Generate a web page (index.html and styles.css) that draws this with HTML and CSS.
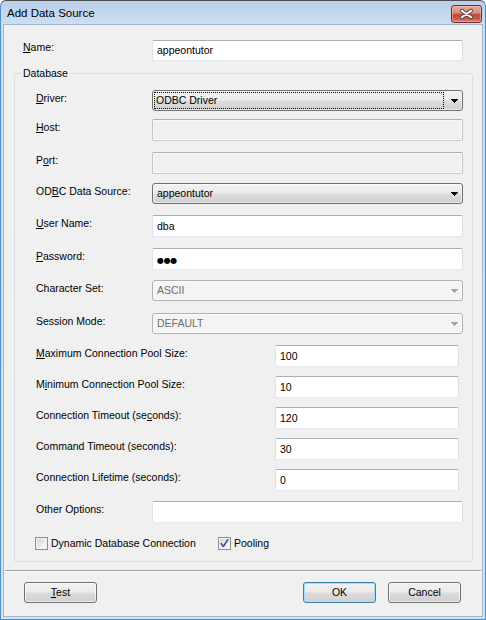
FILE: index.html
```
<!DOCTYPE html>
<html>
<head>
<meta charset="utf-8">
<title>Add Data Source</title>
<link rel="stylesheet" href="styles.css">
</head>
<body>
<div class="window">
  <div class="titlebar">
    <div class="title">Add Data Source</div>
    <div class="close">
      <svg width="31" height="16" viewBox="0 0 31 16">
        <path d="M10.5 4.5 L20.5 11.5 M20.5 4.5 L10.5 11.5" stroke="#5e4644" stroke-width="4.2" stroke-linecap="round"/>
        <path d="M10.5 4.5 L20.5 11.5 M20.5 4.5 L10.5 11.5" stroke="#ffffff" stroke-width="2.2" stroke-linecap="round"/>
      </svg>
    </div>
  </div>
  <div class="client">
    <div class="name-row">
      <span class="lbl name-lbl"><u>N</u>ame:</span>
      <div class="textbox name-box">appeontutor</div>
    </div>
    <fieldset class="group">
      <legend>Database</legend>
      <div class="grid">
        <span class="lbl"><u>D</u>river:</span>
        <div class="combo span2">
          <span class="value focused">ODBC Driver</span>
          <span class="arrow"><svg width="7" height="4" viewBox="0 0 7 4" shape-rendering="crispEdges"><path d="M0 0h7v1h-1v1h-1v1h-1v1h-1v-1h-1v-1h-1v-1h-1z" fill="#000"/></svg></span>
        </div>

        <span class="lbl"><u>H</u>ost:</span>
        <div class="textbox disabled span2"></div>

        <span class="lbl">P<u>o</u>rt:</span>
        <div class="textbox disabled span2"></div>

        <span class="lbl">OD<u>B</u>C Data Source:</span>
        <div class="combo span2">
          <span class="value">appeontutor</span>
          <span class="arrow"><svg width="7" height="4" viewBox="0 0 7 4" shape-rendering="crispEdges"><path d="M0 0h7v1h-1v1h-1v1h-1v1h-1v-1h-1v-1h-1v-1h-1z" fill="#000"/></svg></span>
        </div>

        <span class="lbl"><u>U</u>ser Name:</span>
        <div class="textbox span2">dba</div>

        <span class="lbl"><u>P</u>assword:</span>
        <div class="textbox span2"><span class="dots">●●●</span></div>

        <span class="lbl">Character Set:</span>
        <div class="combo disabled span2">
          <span class="value">ASCII</span>
          <span class="arrow"><svg width="7" height="4" viewBox="0 0 7 4" shape-rendering="crispEdges"><path d="M0 0h7v1h-1v1h-1v1h-1v1h-1v-1h-1v-1h-1v-1h-1z" fill="#a3a3a3"/></svg></span>
        </div>

        <span class="lbl">Session Mode:</span>
        <div class="combo disabled span2">
          <span class="value">DEFAULT</span>
          <span class="arrow"><svg width="7" height="4" viewBox="0 0 7 4" shape-rendering="crispEdges"><path d="M0 0h7v1h-1v1h-1v1h-1v1h-1v-1h-1v-1h-1v-1h-1z" fill="#a3a3a3"/></svg></span>
        </div>

        <span class="lbl span2"><u>M</u>aximum Connection Pool Size:</span>
        <div class="textbox num">100</div>

        <span class="lbl span2">M<u>i</u>nimum Connection Pool Size:</span>
        <div class="textbox num">10</div>

        <span class="lbl span2">Connection Timeout (se<u>c</u>onds):</span>
        <div class="textbox num">120</div>

        <span class="lbl span2">Command Timeout (seconds):</span>
        <div class="textbox num">30</div>

        <span class="lbl span2">Connection Lifetime (seconds):</span>
        <div class="textbox num">0</div>

        <span class="lbl">Other Options:</span>
        <div class="textbox span2"></div>

        <div class="cb-row">
          <label class="cb-item cb-first"><span class="cb"></span><span>Dynamic Database Connection</span></label>
          <label class="cb-item"><span class="cb checked"><svg width="11" height="11" viewBox="0 0 11 11"><path d="M2.2 5.6 L4.3 8.4 L8.8 1.8" fill="none" stroke="#3d5a94" stroke-width="1.7" stroke-linecap="round" stroke-linejoin="round"/></svg></span><span>Pooling</span></label>
        </div>
      </div>
    </fieldset>
    <div class="sep"></div>
    <div class="buttons">
      <button class="btn btn-test"><u>T</u>est</button>
      <button class="btn default">OK</button>
      <button class="btn">Cancel</button>
    </div>
  </div>
</div>
</body>
</html>
```
FILE: styles.css
```
* {
  box-sizing: border-box;
}

html, body {
  margin: 0;
  background: #ffffff;
}

body {
  font-family: "Liberation Sans", Arial, sans-serif;
  font-size: 10.5px;
  color: #000;
}

u {
  text-decoration: underline;
  text-underline-offset: 1px;
}

.window {
  width: 486px;
  height: 620px;
  display: flex;
  flex-direction: column;
  border: 1px solid #4a8fce;
  border-top-color: #4d4d4d;
  border-radius: 6px 6px 0 0;
  background: linear-gradient(#b9cfe8 0px, #cddff1 24px, #d2e2f3 100%);
  padding: 0 2px 2px;
}

.titlebar {
  height: 23px;
  display: flex;
  justify-content: space-between;
  align-items: flex-start;
}

.title {
  padding: 5px 0 0 4px;
  font-size: 11.5px;
  line-height: 14px;
  color: #000;
}

.close {
  width: 31px;
  height: 18px;
  margin: 4px 1px 0 0;
  border: 1px solid #6e2c28;
  border-radius: 3px;
  background: linear-gradient(#e8a89b 0%, #d88b7d 45%, #c14b3b 52%, #c65546 75%, #d98372 100%);
  box-shadow: inset 0 0 0 1px rgba(255, 210, 200, 0.45);
  display: flex;
}

.client {
  flex: 1;
  background: #f0f0f0;
  border: 1px solid #a3b7cc;
  padding: 15px 9px 0 10px;
  display: flex;
  flex-direction: column;
}

.name-row {
  display: flex;
  padding-left: 9px;
  height: 21px;
}

.lbl {
  line-height: 13px;
  padding-top: 2px;
  white-space: nowrap;
}

.name-lbl {
  width: 129px;
  padding-top: 1px;
}

.textbox {
  height: 22px;
  border: 1px solid;
  border-color: #abadb3 #dbdfe6 #e3e9ef #e2e3ea;
  border-radius: 2px;
  background: #fff;
  padding: 0 4px;
  line-height: 20px;
  white-space: nowrap;
  overflow: hidden;
}

.name-box {
  width: 311px;
  height: 21px;
  line-height: 19px;
}

.textbox.disabled {
  background: #f0f0f0;
  border-color: #adb2b5 #c2c4c6 #c9cbcd #c2c4c6;
  box-shadow: inset 0 0 0 1px #f9f9f9;
}

.textbox.num {
  width: 184px;
}

.dots {
  font-family: "DejaVu Sans", sans-serif;
  font-size: 8px;
  letter-spacing: -0.3px;
}

.group {
  margin: 6px 0 0;
  padding: 0 0 11px;
  border: 1px solid #d5dfe5;
  border-radius: 3px;
  min-width: 0;
}

.group legend {
  margin-left: 6px;
  padding: 0 2px;
  line-height: 13px;
}

.grid {
  display: grid;
  grid-template-columns: 116px 123px 188px;
  grid-template-rows: 29px 33px 31px 32px 33px 32px 33px 32px 31px 31px 31px 31px 32px 36px 13px;
  align-items: start;
  padding: 10px 0 0 21px;
}

.span2 {
  grid-column: span 2;
}

.combo {
  height: 21px;
  display: flex;
  border: 1px solid #707070;
  border-radius: 3px;
  background: linear-gradient(#f2f2f2 0%, #ebebeb 48%, #dddddd 52%, #cfcfcf 100%);
  box-shadow: inset 0 0 0 1px rgba(255, 255, 255, 0.55);
}

.combo.disabled {
  border-color: #adb2b5;
  background: #f4f4f4;
  box-shadow: inset 0 0 0 1px #fbfbfb;
  color: #6d6d6d;
}

.value {
  flex: 1;
  padding-left: 4px;
  line-height: 19px;
  white-space: nowrap;
}

.value.focused {
  margin: 1px 0 1px 1px;
  border: 1px dotted #000;
  padding-left: 1px;
  line-height: 15px;
}

.arrow {
  width: 18px;
  display: flex;
  align-items: center;
  padding-left: 7px;
}

.arrow svg {
  display: block;
}

.cb-row {
  grid-column: 1 / -1;
  display: flex;
  margin-left: -1px;
  height: 13px;
}

.cb-item {
  display: flex;
  align-items: flex-start;
  gap: 3px;
  line-height: 13px;
  white-space: nowrap;
}

.cb-first {
  width: 183px;
}

.cb {
  width: 13px;
  height: 13px;
  border: 1px solid #8e8f8f;
  background: linear-gradient(135deg, #cfd2d7 0%, #eeeff0 60%, #fbfbfb 100%);
  box-shadow: inset 0 0 0 1px #f3f3f3;
  display: flex;
  align-items: center;
  justify-content: center;
}

.cb svg {
  display: block;
}

.sep {
  margin: 8px -8px 0 -9px;
  height: 2px;
  border-top: 1px solid #a0a0a0;
  border-bottom: 1px solid #ffffff;
}

.buttons {
  display: flex;
  gap: 12px;
  margin-top: 10px;
  padding: 0 12px 0 10px;
}

.btn {
  width: 73px;
  height: 21px;
  padding: 0;
  border: 1px solid #707070;
  border-radius: 3px;
  background: linear-gradient(#f2f2f2 0%, #ebebeb 48%, #dddddd 52%, #cfcfcf 100%);
  box-shadow: inset 0 0 0 1px rgba(255, 255, 255, 0.7);
  font: inherit;
  line-height: 19px;
  color: #000;
}

.btn-test {
  margin-right: auto;
}

.btn.default {
  border-color: #3c7fb1;
  box-shadow: inset 0 0 0 1px #a9dcf5;
}
```
